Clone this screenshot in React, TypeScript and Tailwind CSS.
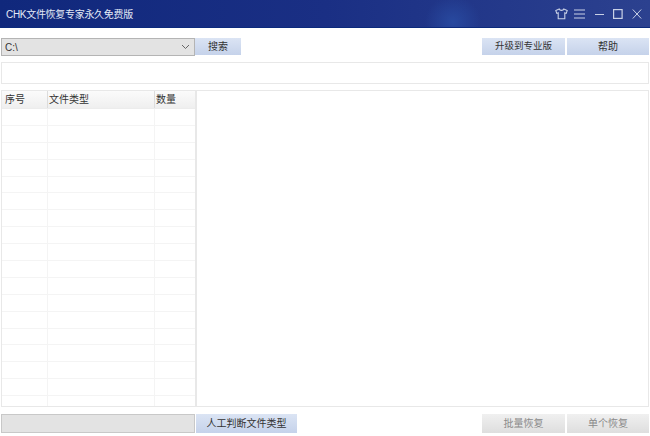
import React from 'react';

const rows = Array.from({ length: 18 });

function TitleIcons() {
  return (
    <div className="flex items-center pr-[8px] text-[#c9d1e6]">
      <svg width="13" height="12" viewBox="0 0 13 12" fill="none" stroke="currentColor" strokeWidth="1.1">
        <path d="M4.2 1 L0.8 2.6 L1.8 5.4 L3.2 4.9 V10.8 H9.8 V4.9 L11.2 5.4 L12.2 2.6 L8.8 1 C8.3 2.8 4.7 2.8 4.2 1 Z" />
      </svg>
      <svg width="11" height="12" viewBox="0 0 11 12" stroke="currentColor" strokeWidth="1" className="ml-[6px]">
        <path d="M0 2 H11 M0 6 H11 M0 10 H11" />
      </svg>
      <svg width="9" height="12" viewBox="0 0 9 12" stroke="currentColor" strokeWidth="1" className="ml-[10px]">
        <path d="M0 6.5 H9" />
      </svg>
      <svg width="10" height="12" viewBox="0 0 10 12" fill="none" stroke="currentColor" strokeWidth="1.2" className="ml-[9px]">
        <rect x="0.6" y="1.6" width="8.5" height="8.8" />
      </svg>
      <svg width="10" height="12" viewBox="0 0 10 12" stroke="currentColor" strokeWidth="1" className="ml-[9px]">
        <path d="M0.8 1.5 L9.2 10.5 M9.2 1.5 L0.8 10.5" />
      </svg>
    </div>
  );
}

export default function App() {
  return (
    <div className="w-[650px] h-[436px] bg-white flex flex-col overflow-hidden text-[10px] text-[#333] font-['Liberation_Sans','Noto_Sans_CJK_SC',sans-serif]">
      {/* Title bar */}
      <div className="h-[28px] shrink-0 flex items-center justify-between border-b border-[#0b2a7c] bg-[radial-gradient(ellipse_28px_26px_at_453px_22px,#28499f,transparent),linear-gradient(to_right,#10287c,#1a2f84_50%,#2c418f)]">
        <span className="pl-[6px] pt-[1px] text-[10px] tracking-[-0.3px] text-[#e4e9f6]">CHK文件恢复专家永久免费版</span>
        <TitleIcons />
      </div>

      {/* Drive select row */}
      <div className="mt-[10px] h-[18px] shrink-0 flex items-start px-[1px]">
        <div className="w-[194px] h-[18px] flex items-center justify-between border border-[#b4b4b4] bg-[#e3e3e3] pl-[3px] pr-[4px]">
          <span>C:\</span>
          <svg width="9" height="6" viewBox="0 0 9 6" fill="none" stroke="#666" strokeWidth="1">
            <path d="M1 1 L4.5 4.5 L8 1" />
          </svg>
        </div>
        <div className="w-[46px] h-[17px] flex items-center justify-center bg-gradient-to-b from-[#dbe4f4] to-[#c5d2ea]">搜索</div>
        <div className="ml-auto w-[83px] h-[17px] flex items-center justify-center bg-gradient-to-b from-[#dbe4f4] to-[#c5d2ea] text-[9.5px]">升级到专业版</div>
        <div className="ml-[2px] w-[82px] h-[17px] flex items-center justify-center bg-gradient-to-b from-[#dbe4f4] to-[#c5d2ea]">帮助</div>
      </div>

      {/* Path box */}
      <div className="mt-[6px] mx-[1px] h-[22px] shrink-0 border border-[#e8e8e8] bg-white" />

      {/* Main area */}
      <div className="mt-[6px] h-[317px] shrink-0 flex px-[1px]">
        <div className="w-[195px] border border-[#e8e8e8] overflow-hidden">
          <div className="h-[18px] flex items-center bg-gradient-to-b from-[#fbfbfb] to-[#efefef] border-b border-[#ececec]">
            <div className="w-[46px] pl-[3px] h-full flex items-center border-r border-[#dcdcdc]">序号</div>
            <div className="w-[107px] pl-[1px] h-full flex items-center border-r border-[#dcdcdc]">文件类型</div>
            <div className="pl-[1px]">数量</div>
          </div>
          {rows.map((_, i) => (
            <div key={i} className="h-[16.9px] flex border-b border-[#f4f4f4]">
              <div className="w-[46px] border-r border-[#f4f4f4]" />
              <div className="w-[107px] border-r border-[#f4f4f4]" />
              <div className="flex-1" />
            </div>
          ))}
        </div>
        <div className="flex-1 border border-[#e8e8e8] bg-white" />
      </div>

      {/* Bottom row */}
      <div className="mt-[7px] h-[19px] shrink-0 flex px-[1px]">
        <div className="w-[194px] border border-[#c8c8c8] bg-[#e3e3e3]" />
        <div className="ml-[1px] w-[101px] flex items-center justify-center bg-gradient-to-b from-[#dbe4f4] to-[#c5d2ea]">人工判断文件类型</div>
        <div className="ml-auto w-[83px] flex items-center justify-center bg-gradient-to-b from-[#f0f0f0] to-[#dedede] text-[#8a8a8a]">批量恢复</div>
        <div className="ml-[2px] w-[82px] flex items-center justify-center bg-gradient-to-b from-[#f0f0f0] to-[#dedede] text-[#8a8a8a]">单个恢复</div>
      </div>
    </div>
  );
}
